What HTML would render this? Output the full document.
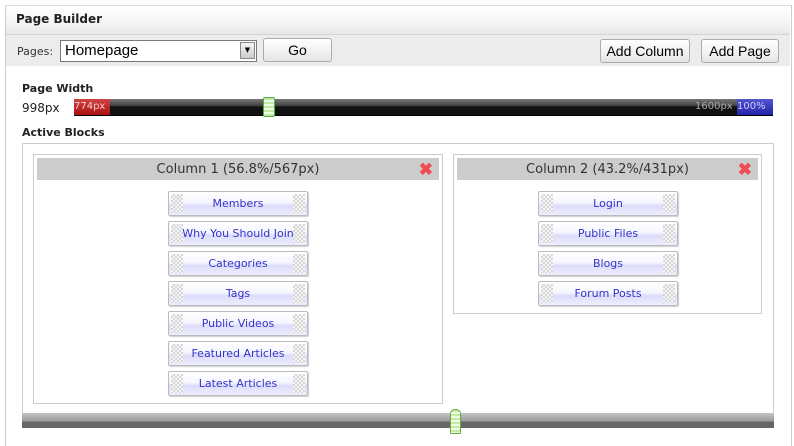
<!DOCTYPE html>
<html><head><meta charset="utf-8"><style>
body{margin:0;width:794px;height:437px;background:#fff;font-family:Verdana,"DejaVu Sans",sans-serif;position:relative;overflow:hidden}
.a{position:absolute}
.btn{position:absolute;border:1px solid #aaa;border-radius:3px;background:linear-gradient(#fff,#f0f0f0 60%,#e4e4e4);font:14px "Liberation Sans",Arial,sans-serif;color:#000;text-align:center;line-height:22px;box-sizing:border-box;height:24px}
.blk{position:absolute;width:140px;height:25px;box-sizing:border-box;border:1px solid #bbb;border-radius:2px;box-shadow:1px 1px 1px #ccc;background:linear-gradient(#fff,#f6f6ff 45%,#dcdcfa 60%,#eeeeff);font-size:11px;color:#3333cc;text-align:center;line-height:23px}
.blk:before,.blk:after{content:"";position:absolute;top:2px;width:12px;height:19px;background:repeating-conic-gradient(#d8d8d8 0 25%,#f4f4f4 0 50%) 0 0/4px 4px}
.blk:before{left:2px}.blk:after{right:2px}
.col{position:absolute;border:1px solid #ccc;box-sizing:border-box}
.ch{position:absolute;left:3px;right:3px;top:3px;height:22px;background:#ccc;font-size:13px;color:#333;text-align:center;line-height:24px}
.x{position:absolute;right:6px;top:4px;color:#f04a55;font:bold 17px Arial,sans-serif;line-height:16px}
</style></head><body>
<div class="a" style="left:5px;top:5px;width:785px;height:440px;border-left:1px solid #ccc;border-right:1px solid #ccc;border-top:1px solid #ddd"></div>
<div class="a" style="left:6px;top:6px;width:784px;height:28px;background:linear-gradient(#fff,#f4f4f4 60%,#e8e8e8);border-bottom:1px solid #d4d4d4"></div>
<div class="a" style="left:16px;top:12px;font-weight:bold;font-size:12px;color:#222">Page Builder</div>
<div class="a" style="left:6px;top:35px;width:784px;height:31px;background:#ececec"></div>
<div class="a" style="left:17px;top:45px;font-size:11px;color:#333">Pages:</div>
<div class="a" style="left:60px;top:40px;width:197px;height:22px;border:1px solid #7a7a7a;background:#fff;box-sizing:border-box;font:15px 'Liberation Sans',Arial,sans-serif;line-height:20px;padding-left:4px">Homepage</div>
<div class="a" style="left:240px;top:42px;width:15px;height:17px;background:linear-gradient(#f4f4f4,#ccc);border:1px solid #888;box-sizing:border-box;font-size:7px;text-align:center;line-height:15px">▼</div>
<div class="btn" style="left:263px;top:38px;width:69px">Go</div>
<div class="btn" style="left:600px;top:39px;width:90px">Add Column</div>
<div class="btn" style="left:701px;top:39px;width:78px">Add Page</div>
<div class="a" style="left:22px;top:82px;font-weight:bold;font-size:11px;color:#222">Page Width</div>
<div class="a" style="left:22px;top:101px;font-size:12px;color:#222">998px</div>
<div class="a" style="left:74px;top:99px;width:699px;height:16px;background:linear-gradient(#777,#444 40%,#111 50%,#111);border-bottom:1px solid #000"></div>
<div class="a" style="left:74px;top:99px;width:36px;height:16px;background:linear-gradient(#c44,#a11);color:#fcc;font-size:10px;line-height:16px">774px</div>
<div class="a" style="left:695px;top:99px;color:#aaa;font-size:10px;line-height:16px">1600px</div>
<div class="a" style="left:737px;top:99px;width:36px;height:16px;background:linear-gradient(#55c,#22a);color:#ccf;font-size:10px;line-height:16px">100%</div>
<div class="a" style="left:263px;top:97px;width:12px;height:20px;box-sizing:border-box;border:1px solid #5a5;border-radius:2px;background:repeating-linear-gradient(#bfe8a0 0 2px,#e8ffe0 2px 4px)"></div>
<div class="a" style="left:22px;top:126px;font-weight:bold;font-size:11px;color:#222">Active Blocks</div>
<div class="col" style="left:22px;top:143px;width:752px;height:275px;border-bottom:none"></div>
<div class="col" style="left:33px;top:154px;width:410px;height:250px"><div class="ch">Column 1 (56.8%/567px)<span class="x">✖</span></div></div>
<div class="col" style="left:453px;top:154px;width:309px;height:160px"><div class="ch">Column 2 (43.2%/431px)<span class="x">✖</span></div></div>
<div class="blk" style="left:168px;top:191px">Members</div>
<div class="blk" style="left:168px;top:221px">Why You Should Join</div>
<div class="blk" style="left:168px;top:251px">Categories</div>
<div class="blk" style="left:168px;top:281px">Tags</div>
<div class="blk" style="left:168px;top:311px">Public Videos</div>
<div class="blk" style="left:168px;top:341px">Featured Articles</div>
<div class="blk" style="left:168px;top:371px">Latest Articles</div>
<div class="blk" style="left:538px;top:191px">Login</div>
<div class="blk" style="left:538px;top:221px">Public Files</div>
<div class="blk" style="left:538px;top:251px">Blogs</div>
<div class="blk" style="left:538px;top:281px">Forum Posts</div>
<div class="a" style="left:22px;top:413px;width:752px;height:15px;background:linear-gradient(#c4c4c4,#999 55%,#666 56%,#666)"></div>
<div class="a" style="left:450px;top:409px;width:11px;height:25px;box-sizing:border-box;border:1px solid #6a4;border-radius:5px 5px 1px 1px;background:repeating-linear-gradient(#c4eaa8 0 2px,#eeffe4 2px 4px)"></div>
</body></html>
